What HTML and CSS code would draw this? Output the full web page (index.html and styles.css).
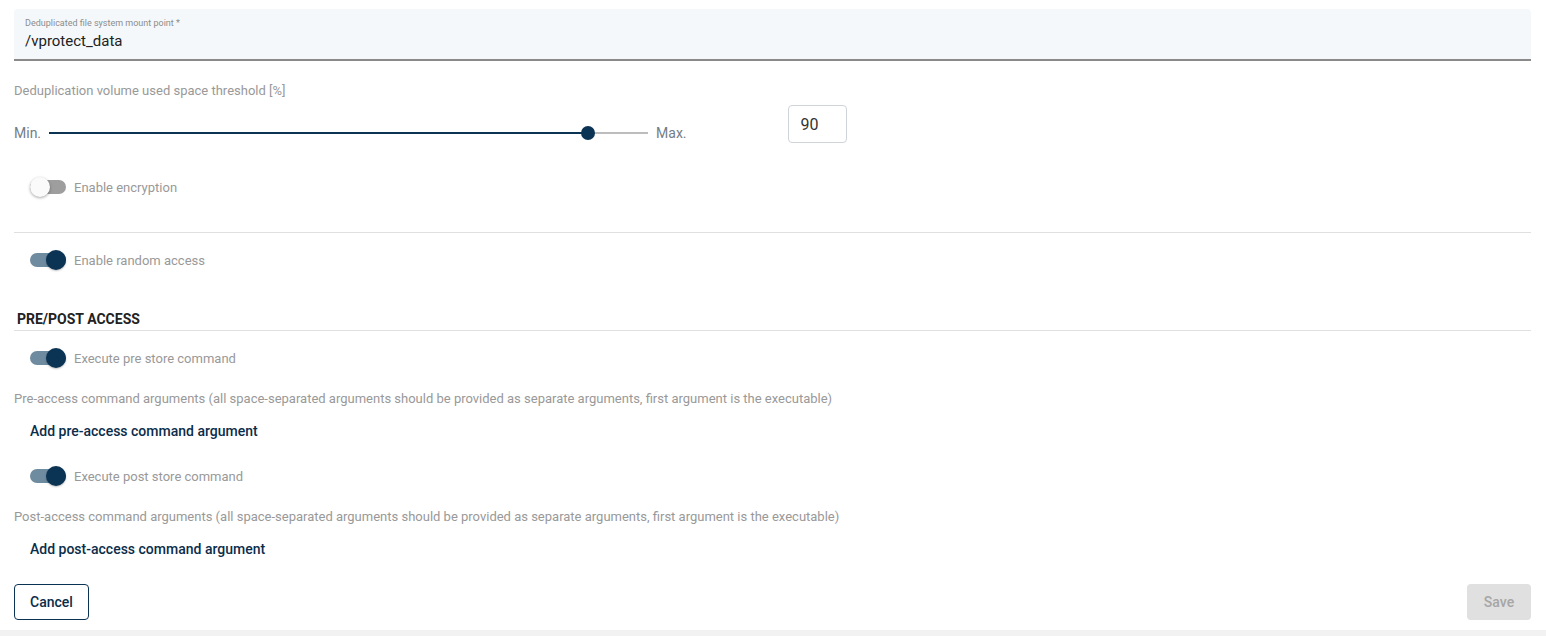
FILE: index.html
```html
<!DOCTYPE html>
<html lang="en">
<head>
    <meta charset="UTF-8">
    <title>Storage settings</title>
    <link rel="stylesheet" href="styles.css">
</head>
<body>
    <div class="card">
        <div class="field">
            <label class="field-label">Deduplicated file system mount point *</label>
            <div class="field-value">/vprotect_data</div>
        </div>

        <div class="hint threshold-label">Deduplication volume used space threshold [%]</div>
        <div class="slider-row">
            <span class="slider-end">Min.</span>
            <div class="slider">
                <div class="slider-fill" style="width:90%"></div>
                <div class="slider-thumb" style="left:90%"></div>
            </div>
            <span class="slider-end">Max.</span>
            <div class="num-input">90</div>
        </div>

        <div class="toggle-row encryption">
            <span class="toggle"><span class="knob"></span></span>
            <span class="toggle-label">Enable encryption</span>
        </div>
        <hr class="divider">

        <div class="toggle-row random">
            <span class="toggle on"><span class="knob"></span></span>
            <span class="toggle-label">Enable random access</span>
        </div>

        <h3 class="section-title">PRE/POST ACCESS</h3>
        <hr class="divider">

        <div class="toggle-row cmd">
            <span class="toggle on"><span class="knob"></span></span>
            <span class="toggle-label">Execute pre store command</span>
        </div>
        <div class="hint">Pre-access command arguments (all space-separated arguments should be provided as separate arguments, first argument is the executable)</div>
        <a class="add-link">Add pre-access command argument</a>

        <div class="toggle-row cmd">
            <span class="toggle on"><span class="knob"></span></span>
            <span class="toggle-label">Execute post store command</span>
        </div>
        <div class="hint">Post-access command arguments (all space-separated arguments should be provided as separate arguments, first argument is the executable)</div>
        <a class="add-link">Add post-access command argument</a>

        <div class="actions">
            <button class="btn btn-outline">Cancel</button>
            <button class="btn btn-disabled" disabled>Save</button>
        </div>
    </div>
</body>
</html>
```

FILE: styles.css
```css
body{margin:0;background:#f2f2f2;font-family:Roboto,"Liberation Sans",Arial,sans-serif;color:#333}
.card{width:1546px;height:630px;box-sizing:border-box;background:#fff;padding:9px 15px 10px 14px;box-shadow:0 2px 6px rgba(0,0,0,0.18);display:flex;flex-direction:column}
.field{background:#f4f8fb;border-bottom:2px solid #8a8a8a;border-radius:4px 4px 0 0;box-sizing:border-box;padding:9px 11px 0;height:52px;flex-shrink:0}
.field-label{display:block;font-size:9px;color:#8c8c8c;line-height:11px}
.field-value{font-size:15px;color:#222;line-height:18px;margin-top:3px}
.hint{font-size:13px;color:#999;line-height:16px}
.threshold-label{margin-top:22px}
.slider-row{display:flex;align-items:center;margin-top:6px;height:38px;flex-shrink:0}
.slider-end{font-size:14px;color:#737d87;position:relative;top:9px}
.slider{position:relative;width:599px;height:2px;background:#bdbdbd;margin:0 8px;top:9px}
.slider-fill{height:2px;background:#0b3354}
.slider-thumb{position:absolute;top:-6px;width:14px;height:14px;margin-left:-7px;border-radius:50%;background:#0b3354}
.num-input{width:59px;height:38px;box-sizing:border-box;border:1px solid #cfd4da;border-radius:4px;margin-left:101px;font-size:16px;color:#333;padding:10px 0 0 12px;line-height:18px}
.toggle-row{display:flex;align-items:center;padding-left:16px;height:20px;flex-shrink:0}
.toggle{position:relative;width:36px;height:14px;border-radius:7px;background:#9e9e9e;margin-right:8px}
.toggle .knob{position:absolute;top:-3px;left:0;width:20px;height:20px;border-radius:50%;background:#fafafa;box-shadow:0 1px 3px rgba(0,0,0,0.35)}
.toggle.on{background:#6e8ba0}
.toggle.on .knob{left:16px;background:#0b3354;box-shadow:0 1px 2px rgba(0,0,0,0.25)}
.toggle-label{font-size:13px;color:#999}
.encryption{margin-top:34px}
.divider{border:0;border-top:1px solid #e0e0e0;margin:0;width:100%;flex-shrink:0}
.encryption + .divider{margin-top:35px}
.random{margin-top:17px}
.section-title{font-size:14px;font-weight:700;color:#222;margin:40px 0 2px 3px;line-height:18px}
.cmd{margin-top:17px}
.toggle-row + .hint{margin-top:23px}
.hint + .add-link{margin-top:15px}
.add-link{display:block;font-size:14px;font-weight:500;color:#0b2d4a;padding-left:16px;line-height:18px;margin-bottom:9px}
.add-link:last-of-type{margin-bottom:0}
.actions{display:flex;justify-content:space-between;margin-top:auto}
.btn{font-family:inherit;font-size:14px;font-weight:500;height:36px;border-radius:4px;padding:0 15px}
.btn-outline{background:#fff;border:1px solid #0b3354;color:#0b2d4a}
.btn-disabled{background:#e0e0e0;border:0;color:#a6a6a6;width:64px;padding:0}
```
